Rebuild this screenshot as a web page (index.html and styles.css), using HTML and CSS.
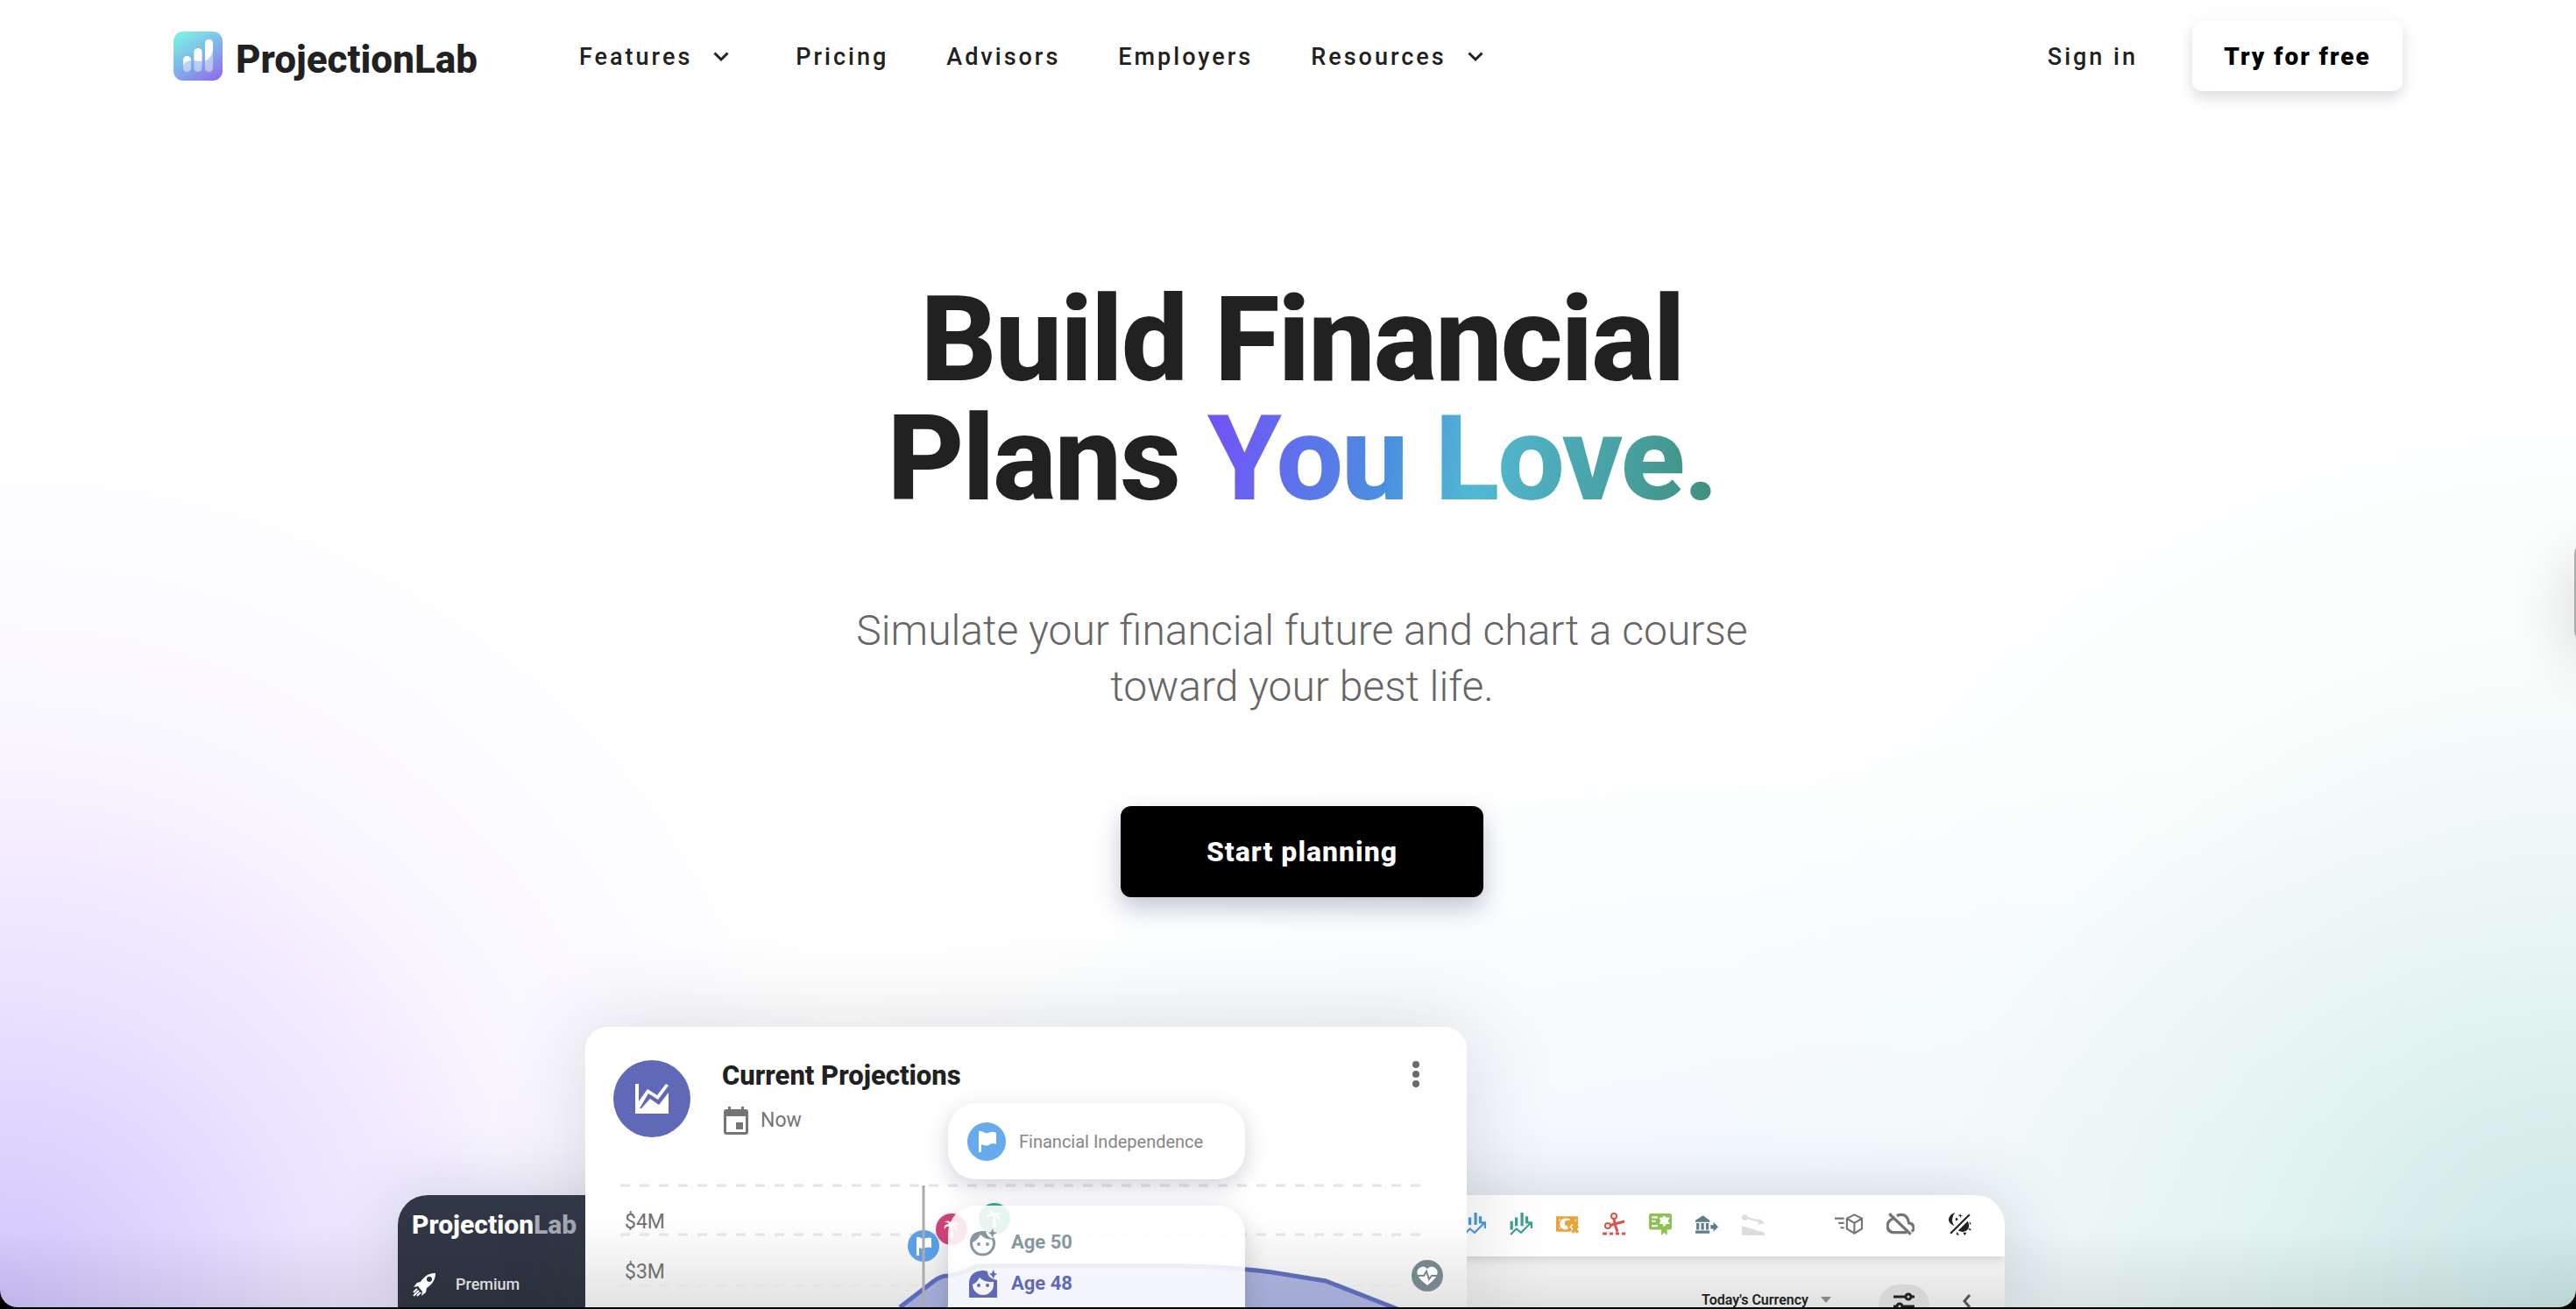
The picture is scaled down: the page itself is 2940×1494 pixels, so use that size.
FILE: index.html
```html
<!DOCTYPE html>
<html lang="en">
<head>
<meta charset="utf-8">
<title>ProjectionLab</title>
<link rel="stylesheet" href="styles.css">
</head>
<body>
<div class="window">
  <header class="topbar">
    <a class="brand" href="#">
      <svg class="brand-mark" viewBox="0 0 56 56" aria-hidden="true">
        <defs><linearGradient id="mark" x1="0.2" y1="0" x2="0.8" y2="1"><stop offset="0" stop-color="#7df0e4"/><stop offset=".5" stop-color="#7fb5ea"/><stop offset="1" stop-color="#8f72ec"/></linearGradient></defs>
        <rect width="56" height="56" rx="11" fill="url(#mark)"/>
        <g fill="#fff" fill-opacity=".45"><rect x="11" y="28" width="9" height="18" rx="4.500"/><rect x="23.500" y="19" width="9" height="27" rx="4.500"/><rect x="36" y="9" width="9" height="37" rx="4.500"/></g>
        <path fill="#fff" d="M11 38v-5.500a4.500 4.500 0 0 1 9 0V33Q15 33 11 38zM23.500 33V23.500a4.500 4.500 0 0 1 9 0V34Q28 34 23.500 33zM36 33.500v-20a4.500 4.500 0 0 1 9 0V21Q43 31 36 33.500z"/>
      </svg>
      <span class="brand-name">ProjectionLab</span>
    </a>
    <nav class="menu">
      <button class="menu-item menu-drop" type="button">Features<svg class="caret" viewBox="0 0 18 12" aria-hidden="true"><path d="M1.500 1.500 9 9l7.500-7.500"/></svg></button>
      <a class="menu-item" href="#">Pricing</a>
      <a class="menu-item" href="#">Advisors</a>
      <a class="menu-item" href="#">Employers</a>
      <button class="menu-item menu-drop" type="button">Resources<svg class="caret" viewBox="0 0 18 12" aria-hidden="true"><path d="M1.500 1.500 9 9l7.500-7.500"/></svg></button>
    </nav>
    <a class="menu-item sign-in" href="#">Sign in</a>
    <button class="try" type="button">Try for free</button>
  </header>

  <main>
    <section class="hero">
      <h1>Build Financial<br>Plans <span class="love">You Love.</span></h1>
      <p class="lead">Simulate your financial future and chart a course<br>toward your best life.</p>
      <button class="start" type="button">Start planning</button>
    </section>

    <section class="showcase">
      <div class="app">
        <aside class="app-side">
          <div class="app-brand">Projection<span>Lab</span></div>
          <div class="app-plan">
            <svg viewBox="0 0 28 28" aria-hidden="true"><path fill="#fff" fill-rule="evenodd" d="M27 1C19 1 14 5 10 11L6 12 2 17l5-1 5 6-1 5 5-4 1-5C23 14 27 9 27 1zM20 5a3 3 0 1 1 0 6 3 3 0 0 1 0-6z"/><path stroke="#fff" stroke-width="2" d="m6 19-4 4m6-2-6 6m8-4-4 4"/></svg>
            Premium
          </div>
        </aside>
        <div class="app-main">
          <div class="tools">
            <svg class="c-blue" viewBox="0 0 24 24"><path class="bars" d="M2 16V9M7 13V5M13 13V0M18 11V4"/><path class="ln" d="M1 23l6-6 5 4 10-10M17 10.500h6v6"/></svg>
            <svg class="c-teal" viewBox="0 0 24 24"><path class="bars" d="M2 18V9M7 14V5M13 14V0M18 11V4"/><path class="ln" d="M1 23l6-6 5 4 10-10M17 10.500h6v6"/></svg>
            <svg class="c-amber" viewBox="0 0 24 24"><path fill-rule="evenodd" d="M0 4h23v9l-3 2-3-3-3 3 3 3-2 2H0zm3 3v2l2-2zm0 8v2h2zM11 6a6 6 0 1 0 2 11L11 12l4-5zM20 7v2h1V7z"/><circle cx="12" cy="11" r="3"/><path class="ln thick" d="m17 14 6 7m0-7-6 7"/></svg>
            <svg class="c-red" viewBox="0 0 26 24"><path class="ln thick" d="M13 6l1 6 3 9M13 12l-5 2M14 12l11-3M0 23h5m3 0h4m3 0h4m3 0h4"/><circle class="ln" cx="13" cy="3" r="3"/><circle class="ln" cx="6" cy="14" r="3"/></svg>
            <svg class="c-green" viewBox="0 0 24 24"><path fill-rule="evenodd" d="M2 1h20q2 0 2 2v13q0 2-2 2h-3v6l-3-3-3 3v-6H2q-2 0-2-2V3q0-2 2-2zm1 3v2h6V4zm0 4v2h4V8zm0 5v2h6v-2zM16 3l-2 2h-3l1 4-1 3h3l2 3 2-3h4l-2-3 2-4h-4z"/></svg>
            <svg class="c-slate" viewBox="0 0 24 24"><path d="M8 3 0 8v2h15V8zM1 11h3v7H1zM6 11h3v7H6zM11 11h3v7h-3zM0 19h15v3H0zM16 13h3v-3l5 5-5 5v-3h-3z"/></svg>
            <svg class="c-light" viewBox="0 0 24 24"><path d="M0 14l24 7v3H0z"/><circle cx="3" cy="5" r="3"/><path class="ln" d="m3 5 15 4"/><path d="m18 6 6 5-7 2z"/></svg>
            <svg class="c-grey tool-gap" viewBox="0 0 30 24"><path class="ln" d="M21 2l8 4v11l-8 5-8-5V6zM13 6l8 5 8-5M21 11v11M0 6h10M4 11h6M6 16h4"/></svg>
            <svg class="c-grey" viewBox="0 0 30 24"><path class="ln thick" d="m3 1 23 22M8 6Q2 8 1 13q0 8 7 8h14M11 3q11-4 13 8 6 1 5 7l-2 2"/></svg>
            <svg class="c-black" viewBox="0 0 24 24"><path class="ln" d="M2 22 22 2"/><path d="M7 0Q0 2 0 8q1 4 6 6-3-4-2-8 0-3 3-6zM12 1l1 2 2 0-2 1v2l-1-2-2-1 2-1zM8 5l2 2-2 2-1-2zM10 19 20 9q3 5 0 9-4 4-10 1zM22 9l2 4-2-1zM22 16l2 3-3-1zM15 21h4l-2 3zM9 20l2 4-3-1z"/></svg>
          </div>
          <div class="subtools">
            <button class="currency" type="button">Today's Currency<svg viewBox="0 0 12 8" aria-hidden="true"><path fill="#888" d="M0 0h12L6 7z"/></svg></button>
            <button class="tune" type="button" aria-label="Options"><svg viewBox="0 0 24 24"><path class="ln thick" d="M0 6h13M20 6h4M11 17h13M0 17h3"/><circle class="ln thick" cx="17" cy="6" r="3"/><circle class="ln thick" cx="7" cy="17" r="3"/></svg></button>
            <svg class="back" viewBox="0 0 10 18"><path class="ln thick" d="M8 2 2 9l6 7"/></svg>
          </div>
        </div>
      </div>

      <article class="card">
        <div class="card-head">
          <span class="card-badge"><svg viewBox="0 0 38 34"><path fill="#fff" d="M0 0h4v20L14 6l11 7L35 0l3 2-12 16-11-7L5 28h2l10-11 10 7 11-14v24H0z"/></svg></span>
          <div class="card-title">
            <h2>Current Projections</h2>
            <p class="now"><svg viewBox="0 0 28 32"><path fill="#757575" fill-rule="evenodd" d="M5 0h3v3h12V0h3v3h2q3 0 3 3v23q0 3-3 3H3q-3 0-3-3V6q0-3 3-3h2zM3 11v18h22V11zm11 7h8v8h-8z"/></svg>Now</p>
          </div>
          <button class="more" type="button" aria-label="More"><svg viewBox="0 0 8 32"><circle cx="4" cy="5" r="4"/><circle cx="4" cy="16" r="4"/><circle cx="4" cy="27" r="4"/></svg></button>
        </div>
        <div class="plot">
          <svg class="plot-art" viewBox="0 0 1006 142">
            <path class="grid" d="M40 3h914M40 59h914M40 117h914"/>
            <path fill="#5c6bc0" fill-opacity=".48" d="M359 142 398 112q8-6 16-6 15-2 32-11l240 0q40 0 97 7l62 10 82 32z"/>
            <path class="curve" d="M359 142 398 112q8-6 16-6 15-2 32-11l240 0q40 0 97 7l62 10 82 32"/>
            <g fill="#fff"><circle cx="418" cy="53" r="18" fill="#d2447a"/><circle cx="467" cy="41" r="18" fill="#3fa797"/><path d="M416 63l1-13q-7-1-7 4-2-7 5-7-2-3-6-2 7-4 9 2 5-4 8 1-4-1-6 1 6 1 4 7-2-5-5-6l1 13zM465 51l1-13q-7-1-7 4-2-7 5-7-2-3-6-2 7-4 9 2 5-4 8 1-4-1-6 1 6 1 4 7-2-5-5-6l1 13z"/></g>
            <circle cx="386" cy="72" r="18" fill="#5a9fe8"/><path fill="#fff" d="M378 62h3q5 3 8 1 3-1 6 0v11q-3-1-6 0-4 2-8 0v9h-3z"/>
            <path stroke="#aaa" stroke-width="3" d="M386 3v139"/>
            <circle cx="961" cy="106" r="18" fill="#75868f"/><path fill="#fff" d="M961 117q-16-12-10-19 5-5 10 0 5-5 10 0 6 7-10 19z"/><path fill="none" stroke="#75868f" stroke-width="2" d="M949 106h8l3-5 3 9 3-4h8"/>
          </svg>
          <span class="tick">$4M</span>
          <span class="tick">$3M</span>
        </div>
        <div class="pop goal"><svg viewBox="0 0 44 44"><circle cx="22" cy="22" r="22" fill="#68abed"/><path fill="#fff" d="M13 10h3q7 4 10 1 4-1 7 1v13q-4-2-7 0-4 3-10 0v9h-3z"/></svg>Financial Independence</div>
        <div class="pop ages">
          <div class="age age-a"><svg viewBox="0 0 32 32"><path class="ln thick" d="M4 11a13 13 0 1 0 23 0"/><path d="M1 17Q1 3 16 3h3q1 7 9 9-9 2-15-5-4 8-12 10zM27 0l1 4 4 1-4 2-1 4-2-4-3-2 3-1z"/><circle cx="11" cy="18" r="2"/><circle cx="21" cy="18" r="2"/></svg>Age 50</div>
          <div class="age age-b"><svg viewBox="0 0 32 32"><path fill-rule="evenodd" d="M0 32V16Q0 2 16 1l5 1q0 8 11 10v20zM4 17a12 12 0 0 0 24 0v-3q-11 1-16-5-2 5-8 8zM28 0l1 4 3 1-3 2-1 4-2-4-3-2 3-1z"/><circle cx="11" cy="18" r="2"/><circle cx="21" cy="18" r="2"/></svg>Age 48</div>
        </div>
      </article>
    </section>
  </main>
  <div class="edge-tab"></div>
</div>
</body>
</html>
```
FILE: styles.css
```css
* { box-sizing: border-box; }
html { height: 100%; background: #000; }
body { margin: 0; height: 100%; font-family: Roboto, "Liberation Sans", sans-serif; color: #212121; padding-bottom: 2px; overflow: hidden; }
h1, h2, p { margin: 0; }
button { font-family: inherit; border: 0; background: none; padding: 0; color: inherit; }
a { color: inherit; text-decoration: none; }
svg { display: block; flex: none; }
.ln { fill: none; stroke: currentColor; stroke-width: 2; }
.thick { stroke-width: 3; }
.bars { fill: none; stroke: currentColor; stroke-width: 3; }

.window {
  position: relative; height: 100%; overflow: hidden; border-radius: 0 0 20px 20px;
  background:
    linear-gradient(to top, rgba(0,0,0,.08), transparent 90px),
    radial-gradient(ellipse 34% 68% at 0% 100%, rgba(204,188,252,.9), rgba(222,209,255,.65) 34%, rgba(240,233,255,.35) 66%, transparent),
    radial-gradient(ellipse 36% 72% at 100% 100%, rgba(199,230,226,.95), rgba(216,239,236,.65) 36%, rgba(240,250,248,.35) 70%, transparent),
    radial-gradient(ellipse 40% 45% at 68% 100%, #f0f6fc, transparent),
    #fff;
}

.topbar { display: flex; align-items: center; padding: 24px 198px 0; }
.brand { display: flex; align-items: center; gap: 15px; width: 463px; }
.brand-mark { width: 56px; height: 56px; }
.brand-name { font-size: 44px; line-height: 52px; font-weight: 800; padding-top: 8px; }
.menu { display: flex; gap: 66px; flex: 1; }
.menu-item { font-size: 27px; line-height: 36px; letter-spacing: 3px; font-weight: 500; padding-top: 2px; }
.menu-drop { display: flex; align-items: center; gap: 24px; padding-right: 10px; }
.caret { width: 18px; height: 12px; fill: none; stroke: currentColor; stroke-width: 3; }
.sign-in { margin-right: 62px; }
.try { width: 240px; height: 80px; border-radius: 12px; background: #fff; color: #000; font-size: 28px; font-weight: 900; letter-spacing: 2px; box-shadow: 0 8px 14px rgba(40,50,80,.13), 0 2px 26px rgba(40,50,80,.05); }

.hero { display: flex; flex-direction: column; align-items: center; padding: 216px 0 0 32px; text-align: center; }
h1 { font-size: 136px; line-height: 136px; font-weight: 800; letter-spacing: -2px; }
.love { background: linear-gradient(100deg, #7550f8, #4a8fe0 36%, #52b8d2 53%, #419080 98%); -webkit-background-clip: text; background-clip: text; color: transparent; }
.lead { margin-top: 96px; font-size: 48px; line-height: 64px; font-weight: 300; color: #666; }
.start { margin-top: 104px; width: 414px; height: 104px; border-radius: 12px; background: #000; color: #fff; font-size: 32px; font-weight: 800; letter-spacing: 1px; box-shadow: 0 12px 28px rgba(40,45,90,.28); }

.showcase { display: grid; margin-top: 148px; padding: 0 652px 0 454px; height: 320px; }
.app, .card { grid-area: 1 / 1; }
.app { display: flex; margin-top: 192px; border-radius: 34px 34px 0 0; overflow: hidden; background: #f5f5f5; box-shadow: 0 0 80px rgba(60,70,100,.2); }
.app-side { width: 300px; background: linear-gradient(#323847, #2c313e); color: #fff; padding: 16px 16px; }
.app-brand { font-size: 30px; line-height: 36px; font-weight: 800; }
.app-brand span { color: #aaadb4; }
.app-plan { display: flex; align-items: center; gap: 22px; margin-top: 36px; font-size: 18px; line-height: 28px; font-weight: 500; color: #ddd; }
.app-plan svg { width: 28px; height: 28px; }
.app-main { flex: 1; background: linear-gradient(#f5f5f5 70px, #e0e0e0 130px); }
.tools { display: flex; align-items: center; justify-content: flex-end; gap: 27px; height: 70px; padding: 0 38px 4px 0; background: #fff; box-shadow: 0 2px 12px rgba(60,60,90,.25); }
.tools svg { width: 26px; height: 26px; fill: currentColor; }
.tools .c-grey { width: 32px; }
.tools .tool-gap { margin-left: 53px; }
.tools .c-black { margin-left: 12px; }
.c-blue { color: #4796e0; } .c-teal { color: #3ca090; } .c-amber { color: #e9a33b; } .c-red { color: #dd5347; }
.c-green { color: #8dc152; } .c-slate { color: #607d8b; } .c-light { color: #ddd; } .c-grey { color: #757575; } .c-black { color: #222; }
.subtools { display: flex; align-items: flex-start; justify-content: flex-end; padding: 32px 38px 0 0; }
.currency { display: flex; align-items: center; gap: 14px; margin: 7px 54px 0 0; font-size: 16px; line-height: 22px; font-weight: 600; }
.currency svg { width: 12px; height: 8px; }
.tune { width: 58px; height: 58px; border-radius: 24px; background: #d6d6d6; display: flex; align-items: flex-start; justify-content: center; padding-top: 8px; margin-right: 38px; }
.tune svg { width: 24px; height: 24px; }
.back { width: 10px; height: 18px; margin-top: 10px; color: #555; }

.card { position: relative; width: 1006px; margin-left: 214px; border-radius: 26px 26px 0 0; background: linear-gradient(#fff 220px, #e2e2e2 320px); box-shadow: 0 0 100px rgba(60,60,80,.18); }
.card-head { display: flex; padding: 38px 54px 0 32px; height: 178px; }
.card-badge { width: 88px; height: 88px; border-radius: 50%; background: #5f69b8; display: grid; place-items: center; }
.card-badge svg { width: 38px; height: 34px; }
.card-title { flex: 1; padding-left: 36px; }
h2 { font-size: 31px; line-height: 36px; font-weight: 800; }
.now { display: flex; align-items: center; gap: 12px; margin-top: 17px; font-size: 23px; line-height: 32px; color: #757575; }
.now svg { width: 32px; height: 32px; }
.more { height: 32px; fill: #6b6b6b; }
.more svg { width: 8px; height: 32px; }
.plot { position: relative; height: 142px; padding: 30px 0 0 45px; }
.plot-art { position: absolute; left: 0; top: 0; width: 1006px; height: 142px; }
.grid { fill: none; stroke: #e4e4e4; stroke-width: 3; stroke-dasharray: 11 11; }
.curve { fill: none; stroke: #5c6bb8; stroke-width: 5; }
.tick { display: block; font-size: 23px; line-height: 30px; color: #707070; margin-bottom: 27px; }
.pop { position: absolute; left: 414px; width: 339px; box-shadow: 0 8px 26px rgba(50,55,90,.22); }
.goal { top: 87px; height: 87px; display: flex; align-items: center; gap: 15px; padding-left: 22px; border-radius: 32px; background: #fff; font-size: 20px; color: #858585; }
.goal svg { width: 44px; height: 44px; }
.ages { top: 204px; height: 130px; border-radius: 32px 32px 0 0; background: rgba(255,255,255,.88); padding: 26px 24px 0; }
.age { display: flex; align-items: center; gap: 16px; font-size: 22px; line-height: 32px; font-weight: 700; margin-bottom: 15px; }
.age svg { width: 32px; height: 32px; fill: currentColor; }
.age-a { color: #87979f; } .age-b { color: #6069b8; }

.edge-tab { position: absolute; right: -40px; top: 620px; width: 42px; height: 112px; border-radius: 12px; background: #aaa; box-shadow: 0 20px 70px rgba(0,0,0,.2); }
```
